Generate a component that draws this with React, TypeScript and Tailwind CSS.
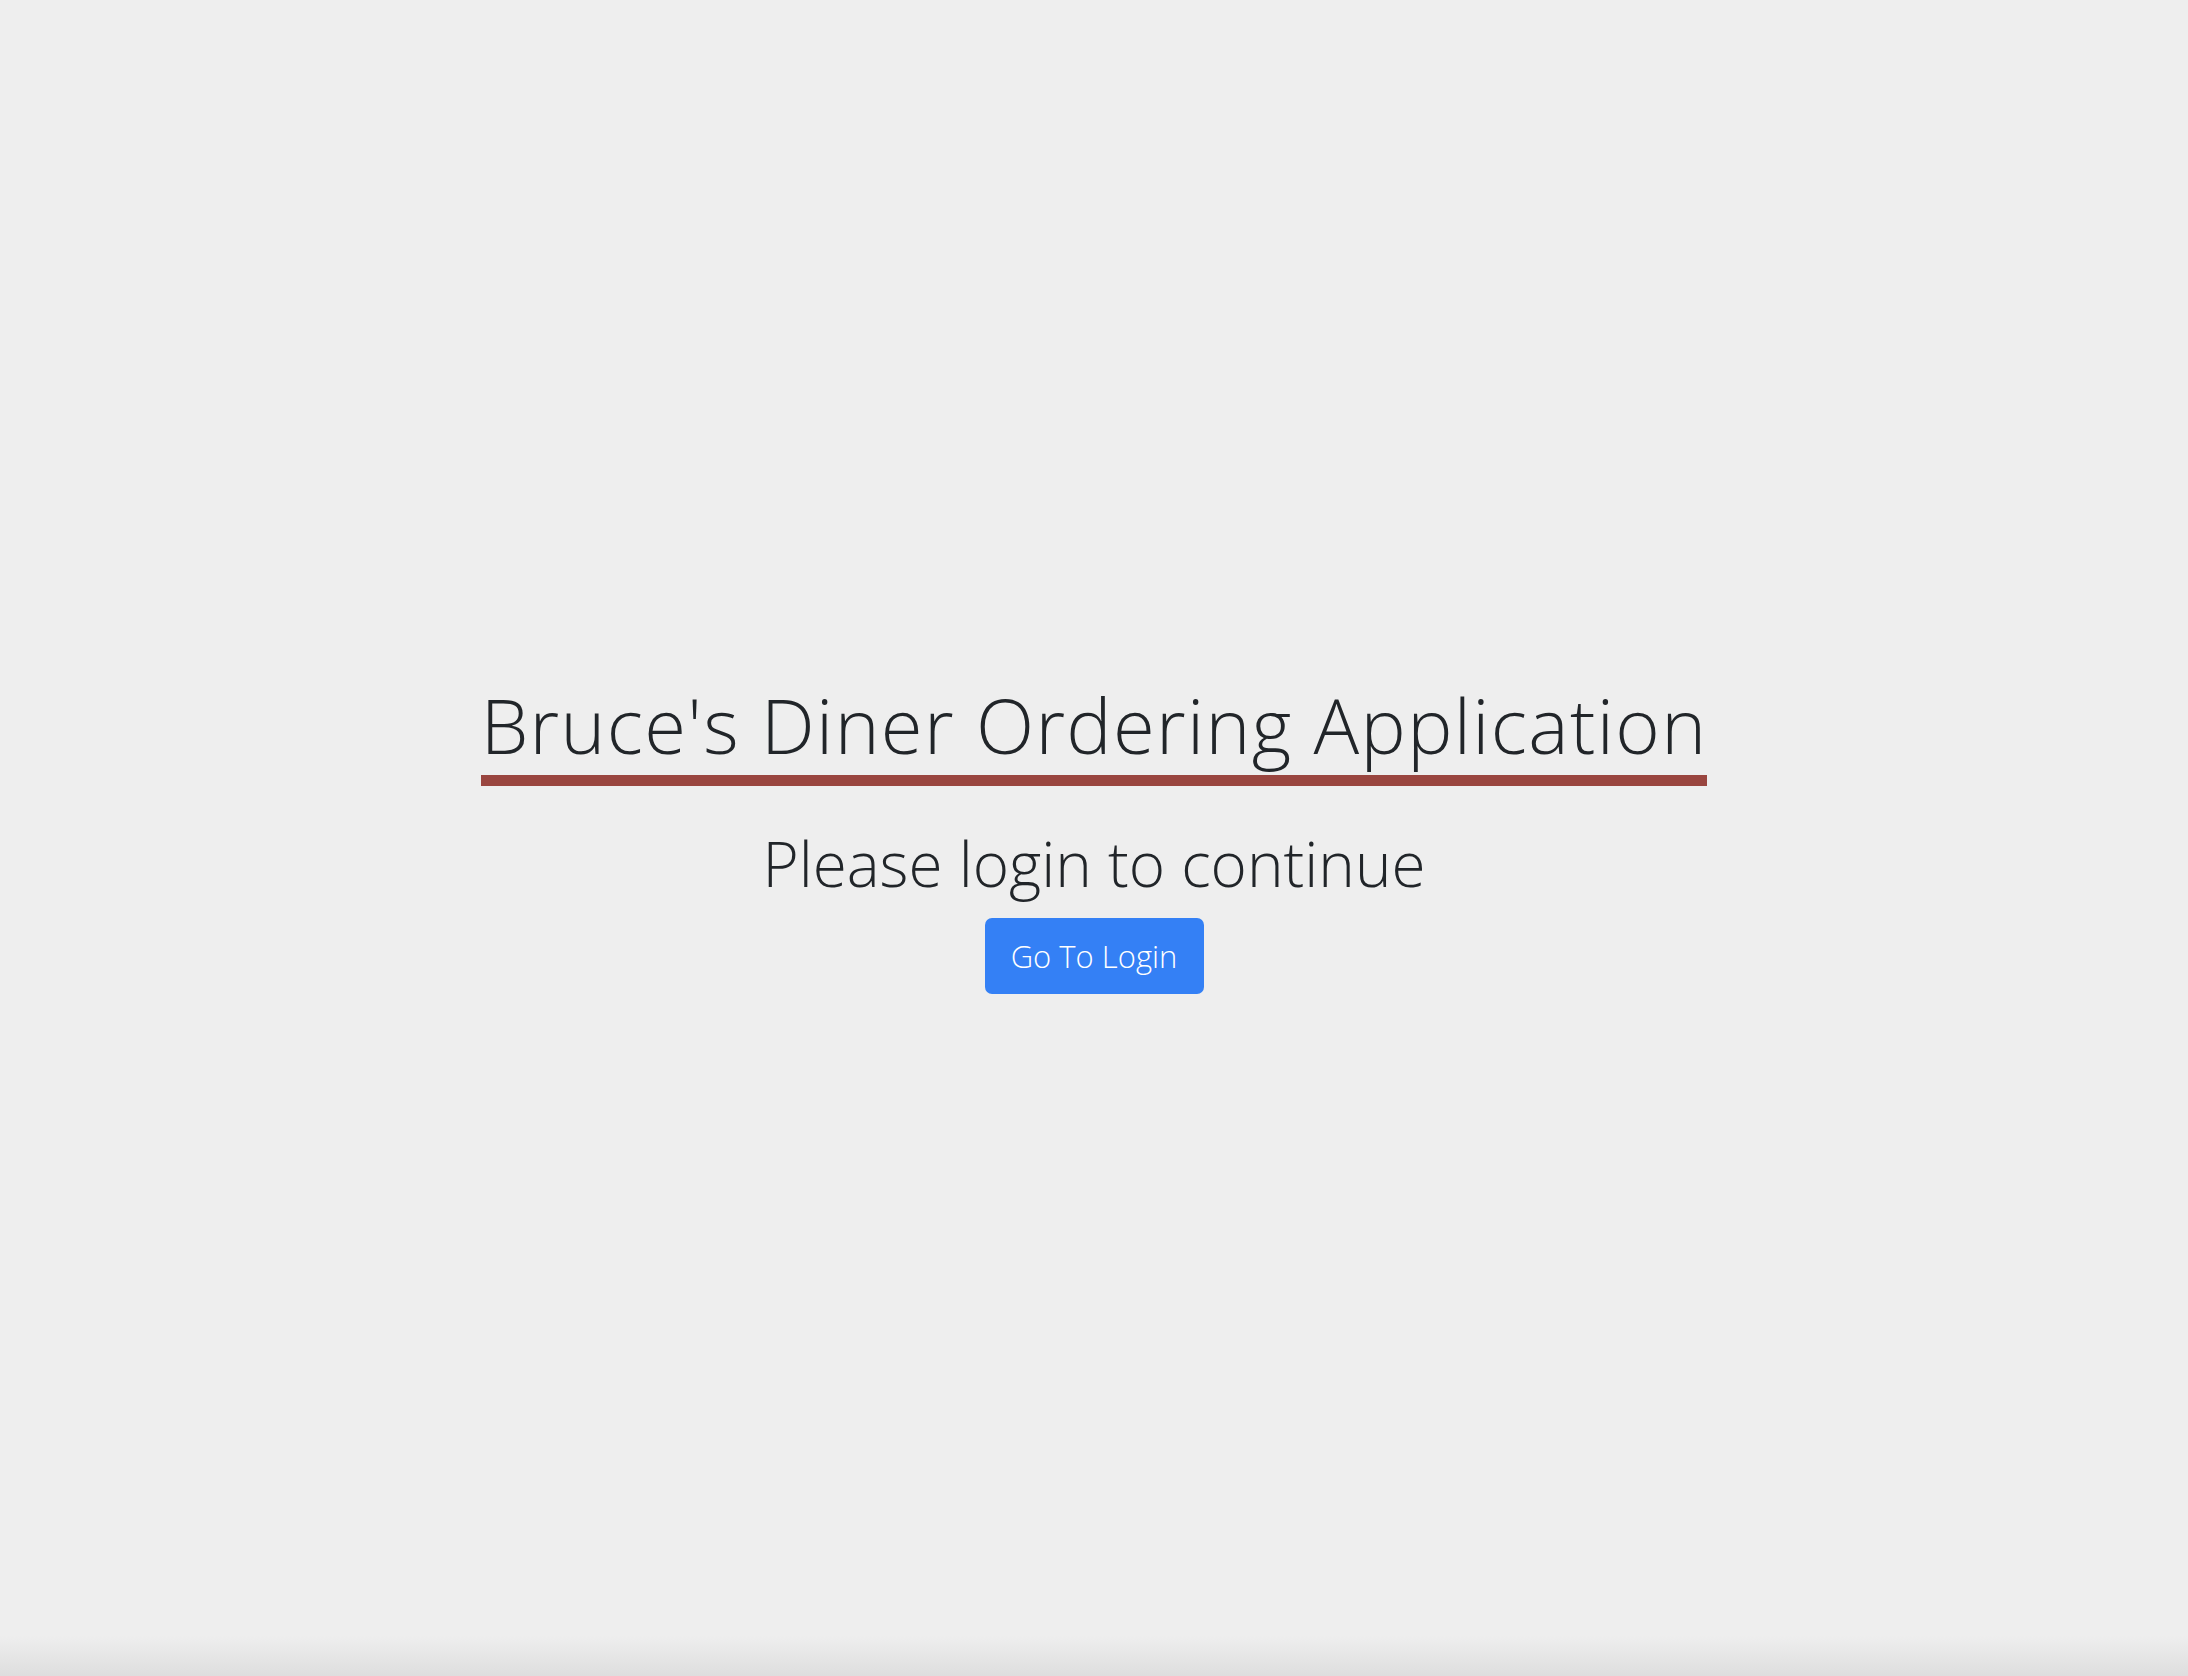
export default function App() {
  return (
    <div className="relative min-h-screen w-full bg-[#eeeeee] overflow-hidden font-['Open_Sans',sans-serif] text-[#212529]">
      <div className="flex min-h-screen flex-col items-center justify-center pb-[6px]">
        <h1 className="border-b-[11px] border-[#99453f] text-[76px] font-light leading-[1.3] tracking-[1.35px]">
          Bruce's Diner Ordering Application
        </h1>
        <h2 className="mt-[43px] text-[62px] font-light leading-[1.1]">
          Please login to continue
        </h2>
        <button className="mt-[21px] h-[76px] w-[219px] rounded-[7px] bg-[#3480f5] text-[31px] font-light text-white">
          Go To Login
        </button>
      </div>
      <div className="pointer-events-none absolute inset-x-0 bottom-0 h-[40px] bg-gradient-to-b from-transparent to-[#dedede]" />
    </div>
  );
}
